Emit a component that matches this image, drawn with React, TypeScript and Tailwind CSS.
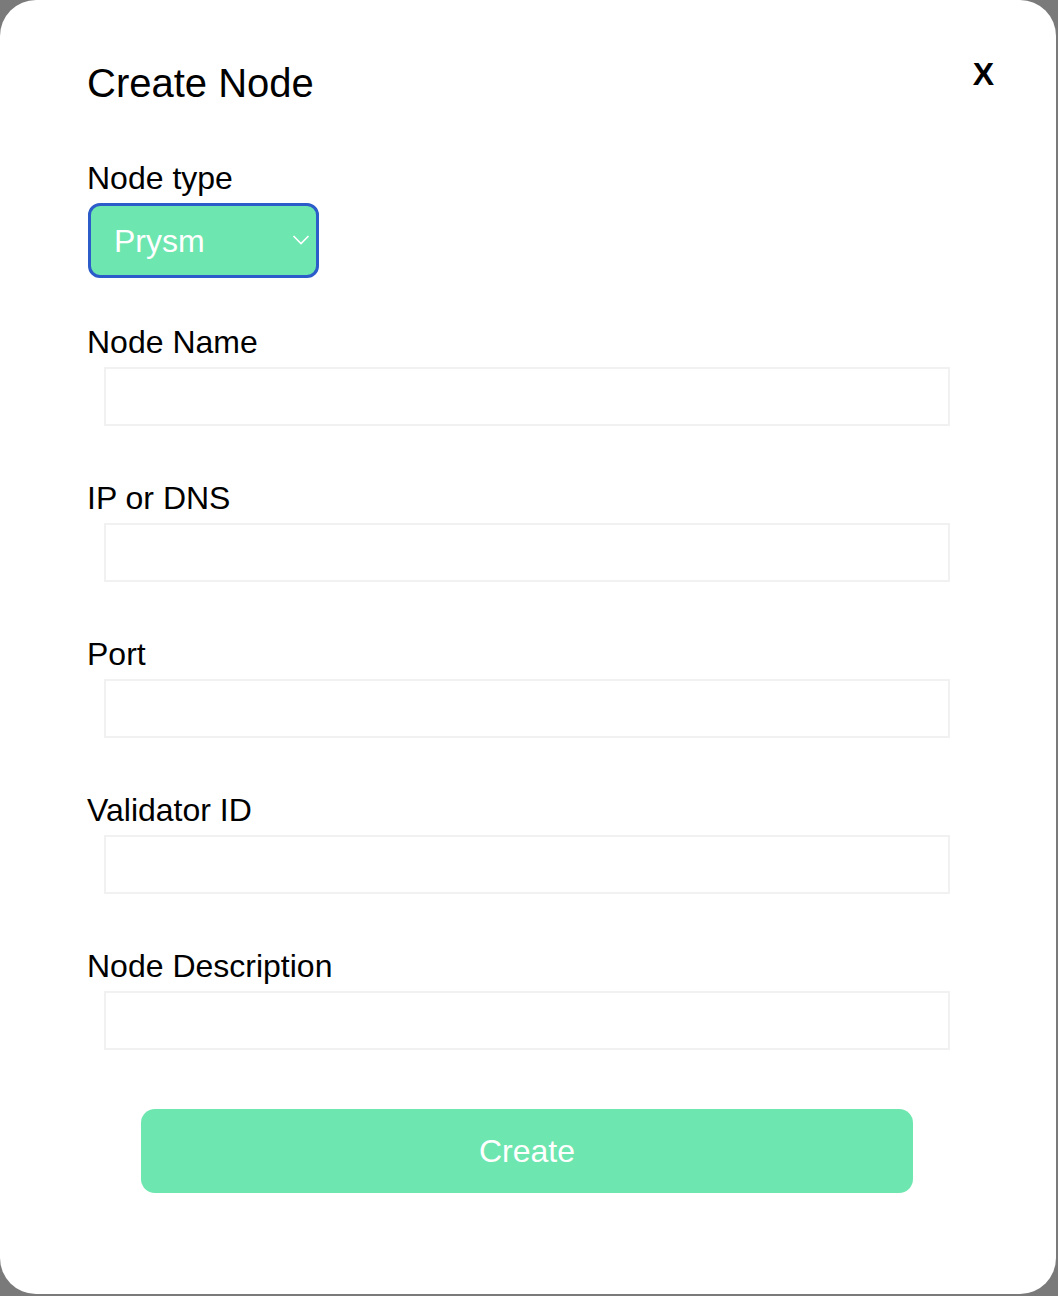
import React from 'react'

const fields = ['Node Name', 'IP or DNS', 'Port', 'Validator ID', 'Node Description']

export default function App() {
  return (
    <div className="w-[1058px] h-[1296px] bg-[#7a7a7a] font-['Liberation_Sans',Arial,sans-serif] text-black">
      <div className="relative w-[1056px] h-[1294px] bg-white rounded-[36px] pl-[87px] pr-[89px] pt-[59px]">
        <button className="absolute top-[56px] right-[62px] text-[32px] leading-[36px] font-bold">X</button>
        <h2 className="text-[40px] leading-[48px]">Create Node</h2>

        <div className="mt-[51px]">
          <label className="block text-[32px] leading-[40px]">Node type</label>
          <div className="mt-[5px] ml-[1px] w-[231px] h-[75px] rounded-[12px] border-[3px] border-[#2c5cc9] bg-[#6ee6b0] flex items-center justify-between pl-[23px] pr-[6px]">
            <span className="text-[32px] leading-[40px] text-white">Prysm</span>
            <svg width="18" height="12" viewBox="0 0 18 12" className="mb-[1px]">
              <polyline points="1.5,2 9,9.5 16.5,2" fill="none" stroke="white" strokeWidth="1.6" />
            </svg>
          </div>
        </div>

        {fields.map((f, i) => (
          <div key={f} className={i === 0 ? 'mt-[44px]' : 'mt-[52px]'}>
            <label className="block text-[32px] leading-[40px]">{f}</label>
            <input className="block mt-[5px] ml-[17px] w-[846px] h-[59px] border-2 border-[#f1f1f1] bg-white outline-none" />
          </div>
        ))}

        <button className="block mt-[59px] mx-auto w-[772px] h-[84px] rounded-[14px] bg-[#6ee6b0] text-white text-[32px] leading-[40px]">
          Create
        </button>
      </div>
    </div>
  )
}
